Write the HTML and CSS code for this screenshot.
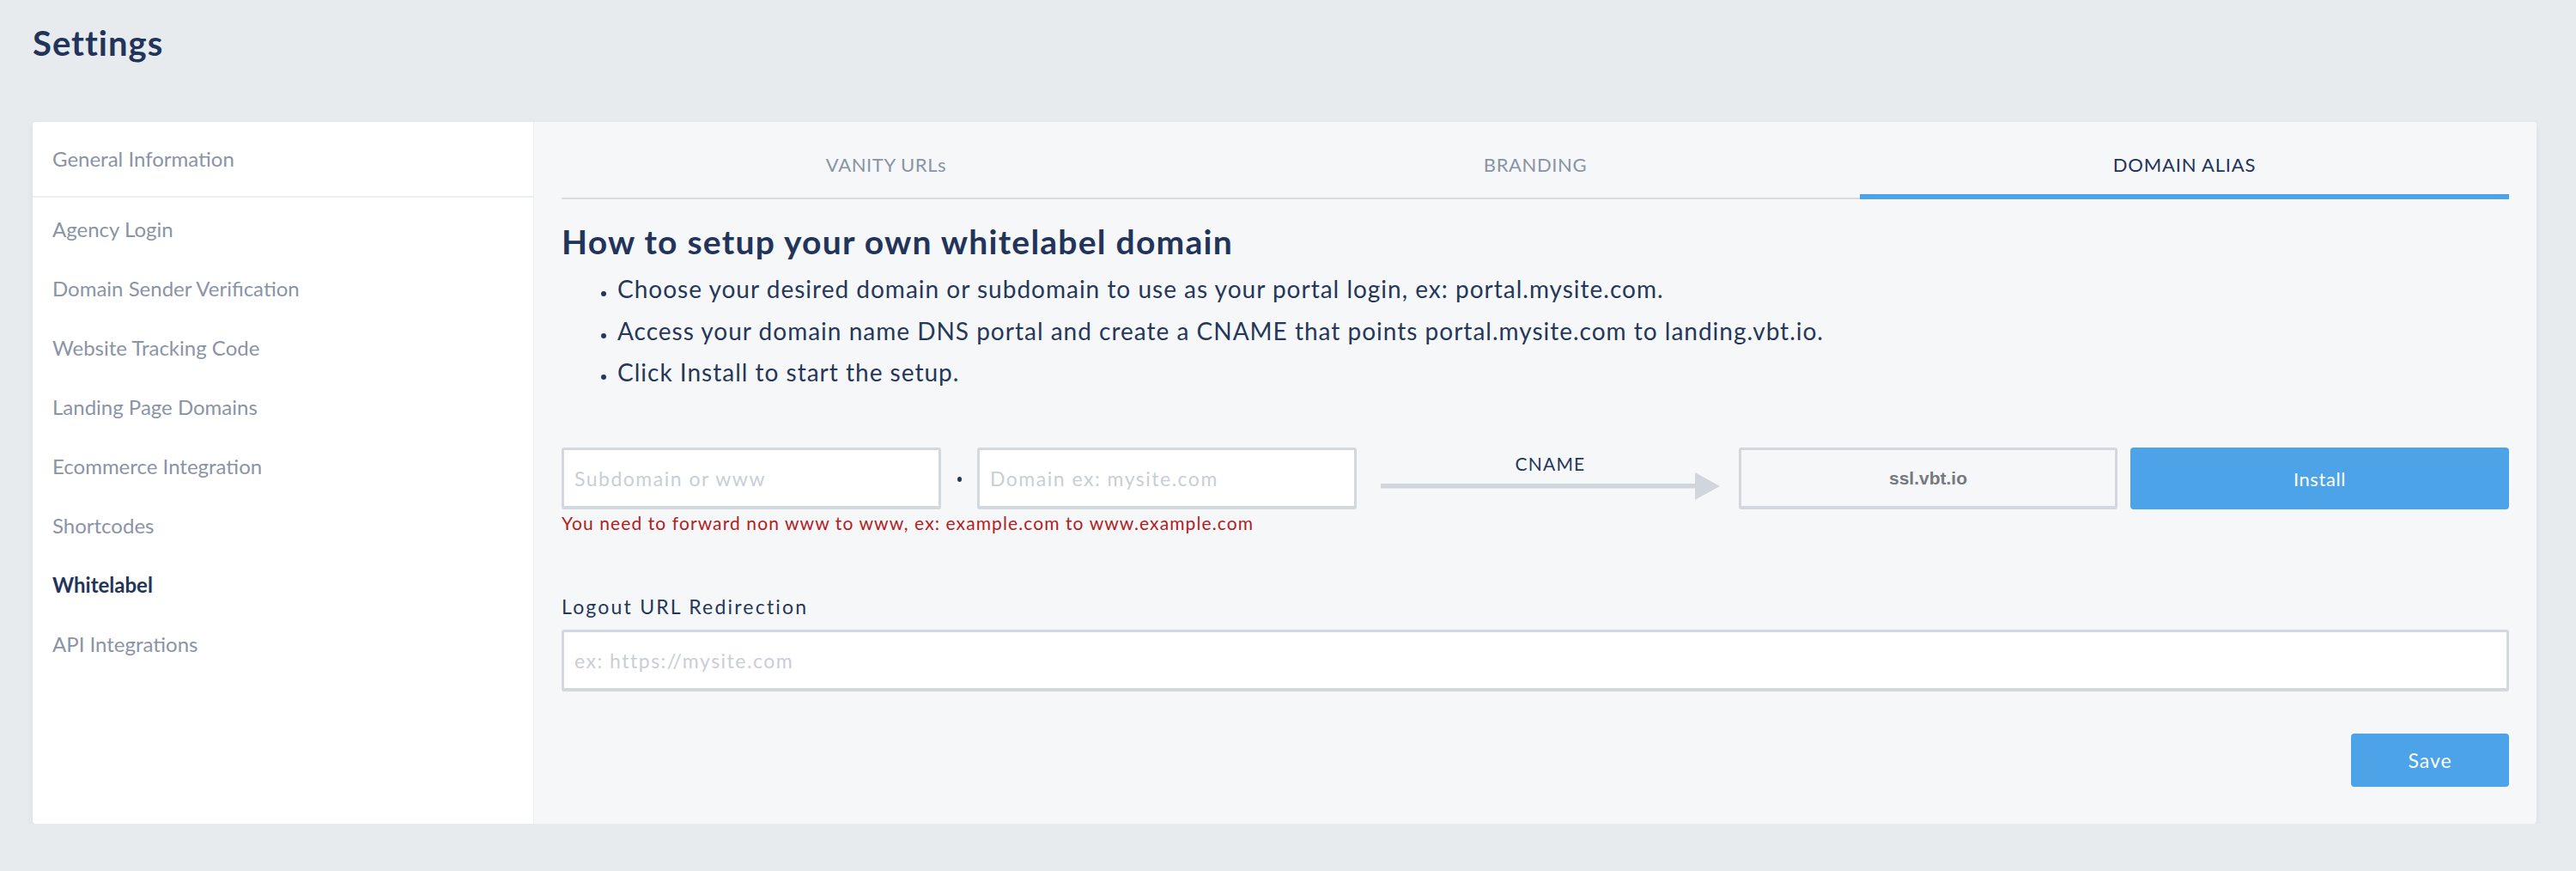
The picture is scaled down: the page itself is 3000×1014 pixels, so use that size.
FILE: index.html
```html
<!DOCTYPE html>
<html lang="en">
<head>
  <meta charset="UTF-8" />
  <title>Settings - Whitelabel</title>
  <link rel="stylesheet" href="styles.css">
</head>
<body>
  <h1 class="page-title">Settings</h1>

  <div class="card">
    <aside class="sidebar">
      <div class="side-head">General Information</div>
      <ul class="side-nav">
        <li>Agency Login</li>
        <li>Domain Sender Verification</li>
        <li>Website Tracking Code</li>
        <li>Landing Page Domains</li>
        <li>Ecommerce Integration</li>
        <li>Shortcodes</li>
        <li class="active">Whitelabel</li>
        <li>API Integrations</li>
      </ul>
    </aside>

    <main class="panel">
      <div class="tabs">
        <div class="tab">VANITY URLs</div>
        <div class="tab">BRANDING</div>
        <div class="tab active">DOMAIN ALIAS</div>
      </div>

      <h2 class="setup-title">How to setup your own whitelabel domain</h2>
      <ul class="steps">
        <li>Choose your desired domain or subdomain to use as your portal login, ex: portal.mysite.com.</li>
        <li>Access your domain name DNS portal and create a CNAME that points portal.mysite.com to landing.vbt.io.</li>
        <li>Click Install to start the setup.</li>
      </ul>

      <div class="domain-row">
        <input class="field" type="text" placeholder="Subdomain or www">
        <span class="sep"><i></i></span>
        <input class="field" type="text" placeholder="Domain ex: mysite.com">
        <div class="cname">
          <span>CNAME</span>
          <svg width="395" height="32" viewBox="0 0 395 32">
            <rect x="0" y="13" width="368" height="5.5" fill="#d1d6dd"/>
            <polygon points="366,0 395,16 366,32" fill="#d1d6dd"/>
          </svg>
        </div>
        <div class="target">ssl.vbt.io</div>
        <button class="btn install">Install</button>
      </div>
      <p class="error">You need to forward non www to www, ex: example.com to www.example.com</p>

      <label class="field-label" for="logout-url">Logout URL Redirection</label>
      <input class="field wide" id="logout-url" type="text" placeholder="ex: https://mysite.com">

      <div class="actions">
        <button class="btn save">Save</button>
      </div>
    </main>
  </div>
</body>
</html>
```

FILE: styles.css
```css
body {
  margin: 0;
  padding: 26px 46px 0 38px;
  background: #e8ebee;
  font-family: Lato, "Open Sans", sans-serif;
  color: #25375a;
}
.page-title {
  margin: 0 0 68px;
  font-size: 40px;
  line-height: 48px;
  font-weight: 700;
  letter-spacing: 1px;
  color: #22345a;
}
.card {
  display: flex;
  background: #f6f7f9;
  border-radius: 4px;
  overflow: hidden;
  box-shadow: 0 3px 8px rgba(30, 45, 70, 0.07);
}
.sidebar {
  width: 583px;
  flex-shrink: 0;
  background: #fff;
  border-right: 1px solid #eceef1;
}
.side-head {
  height: 86px;
  line-height: 86px;
  padding-left: 23px;
  font-size: 24px;
  color: #8a94a6;
  border-bottom: 2px solid #eceef1;
}
.side-nav {
  list-style: none;
  margin: 0;
  padding: 2px 0 0;
}
.side-nav li {
  height: 69px;
  line-height: 69px;
  padding-left: 23px;
  font-size: 24px;
  color: #8a94a6;
}
.side-nav li.active {
  color: #22345a;
  font-weight: 700;
}
.panel {
  flex: 1;
  padding: 0 32px 43px;
}
.tabs {
  display: flex;
  align-items: flex-start;
  border-bottom: 2px solid #d8dce1;
}
.tab {
  flex: 1;
  box-sizing: border-box;
  height: 88px;
  padding-top: 37px;
  line-height: 26px;
  font-size: 22px;
  letter-spacing: 0.6px;
  text-align: center;
  color: #8a93a5;
}
.tab.active {
  height: 90px;
  margin-bottom: -2px;
  border-bottom: 6px solid #4da3e8;
  color: #22345a;
  letter-spacing: 0.8px;
}
.setup-title {
  margin: 25px 0 0;
  font-size: 39px;
  line-height: 48px;
  font-weight: 700;
  letter-spacing: 1.25px;
  color: #22345a;
}
.steps {
  list-style: none;
  margin: 7px 0 0;
  padding-left: 46px;
}
.steps li {
  font-size: 28px;
  line-height: 48.5px;
  letter-spacing: 1px;
  color: #25375a;
}
.steps li::before {
  content: "";
  display: inline-block;
  width: 6px;
  height: 6px;
  border-radius: 50%;
  background: #25375a;
  margin-right: 13px;
  vertical-align: 2px;
}
.domain-row {
  display: flex;
  align-items: flex-start;
  margin-top: 63.5px;
}
.field {
  box-sizing: border-box;
  width: 442px;
  height: 72px;
  padding: 0 12px;
  border: 3px solid #d3d8df;
  border-bottom-width: 4px;
  border-radius: 3px;
  background: #fff;
  font-family: Lato, "Open Sans", sans-serif;
  font-size: 23px;
  letter-spacing: 1.5px;
  color: #25375a;
  outline: none;
}
.field::placeholder {
  color: #c9ced6;
}
.field.wide {
  display: block;
  width: 100%;
  margin-top: 13px;
}
.sep {
  width: 42px;
  height: 72px;
  display: flex;
  align-items: center;
  justify-content: center;
}
.sep i {
  width: 5px;
  height: 6px;
  border-radius: 50%;
  background: #25375a;
  margin-top: 2px;
}
.cname {
  width: 395px;
  margin: 0 22px 0 28px;
  padding-top: 6px;
  display: flex;
  flex-direction: column;
  align-items: center;
}
.cname span {
  font-size: 21px;
  line-height: 26px;
  letter-spacing: 1.2px;
  color: #25375a;
}
.cname svg {
  display: block;
  margin-top: -3px;
}
.target {
  box-sizing: border-box;
  width: 441px;
  height: 72px;
  display: flex;
  align-items: center;
  justify-content: center;
  border: 3px solid #d3d8df;
  border-bottom-width: 4px;
  border-radius: 3px;
  background: #f5f7f9;
  font-family: "Liberation Sans", Arial, sans-serif;
  font-size: 21px;
  font-weight: 700;
  color: #77797c;
}
.btn {
  border: none;
  border-radius: 4px;
  background: #4da3e8;
  color: #fff;
  font-family: Lato, "Open Sans", sans-serif;
  cursor: pointer;
}
.install {
  flex: 1;
  margin-left: 15px;
  height: 72px;
  font-size: 22px;
  letter-spacing: 0.6px;
}
.error {
  margin: 3px 0 0;
  font-size: 21px;
  line-height: 26px;
  letter-spacing: 1.1px;
  color: #b0211d;
}
.field-label {
  display: block;
  margin-top: 70px;
  font-size: 23px;
  line-height: 28px;
  letter-spacing: 2.2px;
  color: #25375a;
}
.actions {
  display: flex;
  justify-content: flex-end;
  margin-top: 49px;
}
.save {
  width: 184px;
  height: 62px;
  font-size: 23px;
  letter-spacing: 1px;
}
```
